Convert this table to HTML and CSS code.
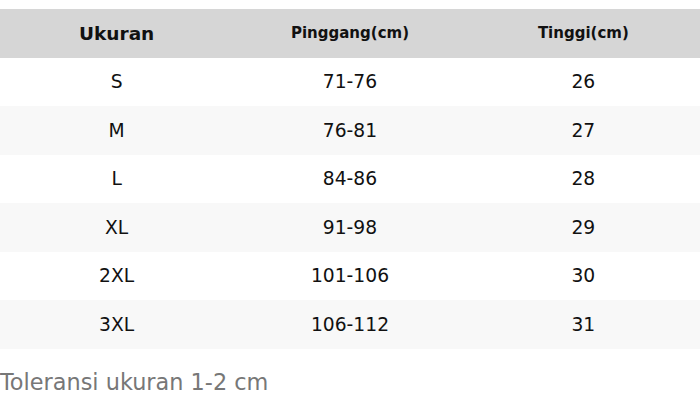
FILE: index.html
```html
<!DOCTYPE html>
<html>
<head>
<meta charset="utf-8">
<link rel="stylesheet" href="styles.css">
</head>
<body>
<div class="page">
  <table class="size-table">
    <thead>
      <tr>
        <th class="h-main">Ukuran</th>
        <th class="h-sub">Pinggang(cm)</th>
        <th class="h-sub">Tinggi(cm)</th>
      </tr>
    </thead>
    <tbody>
      <tr><td>S</td><td>71-76</td><td>26</td></tr>
      <tr><td>M</td><td>76-81</td><td>27</td></tr>
      <tr><td>L</td><td>84-86</td><td>28</td></tr>
      <tr><td>XL</td><td>91-98</td><td>29</td></tr>
      <tr><td>2XL</td><td>101-106</td><td>30</td></tr>
      <tr><td>3XL</td><td>106-112</td><td>31</td></tr>
    </tbody>
  </table>
  <p class="note">Toleransi ukuran 1-2 cm</p>
</div>
</body>
</html>
```
FILE: styles.css
```css
html, body {
  margin: 0;
  padding: 0;
  background: #ffffff;
}
.page {
  padding-top: 9px;
  font-family: "DejaVu Sans", sans-serif;
}
.size-table {
  width: 700px;
  border-collapse: collapse;
  table-layout: fixed;
}
.size-table th,
.size-table td {
  text-align: center;
  padding: 0;
  height: 48.5px;
  color: #111;
}
.size-table thead tr {
  background: #d6d6d6;
}
.h-main {
  font-size: 18.5px;
  font-weight: bold;
}
.h-sub {
  font-size: 15px;
  font-weight: bold;
}
.size-table td {
  font-size: 18.7px;
}
.size-table tbody tr:nth-child(even) {
  background: #f8f8f8;
}
.note {
  margin: 20px 0 0 0;
  font-size: 22.4px;
  color: #777;
}
```
